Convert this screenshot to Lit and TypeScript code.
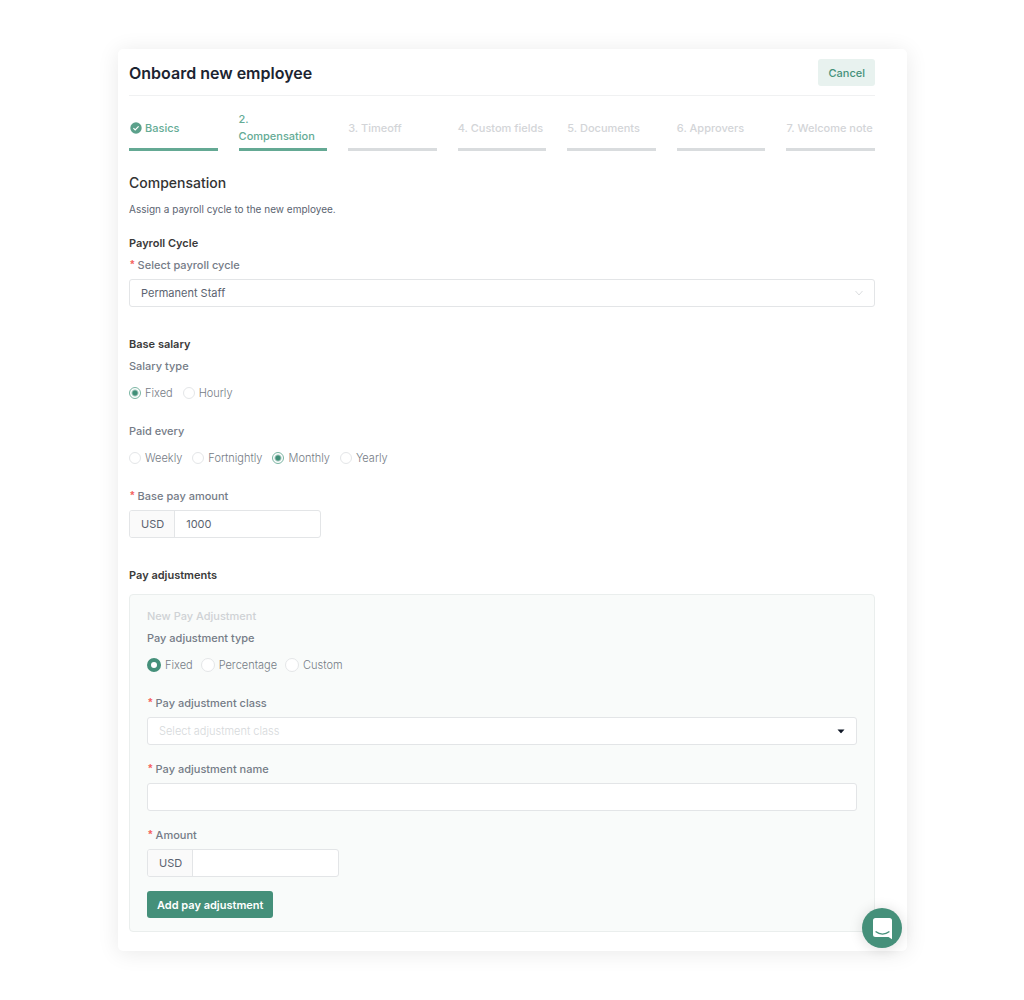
import { LitElement, html, css, nothing } from "lit";
import { customElement, state } from "lit/decorators.js";

interface Choice {
  value: string;
  label: string;
}

const STEPS = [
  "Basics",
  "2. Compensation",
  "3. Timeoff",
  "4. Custom fields",
  "5. Documents",
  "6. Approvers",
  "7. Welcome note",
];

const SALARY_TYPES: Choice[] = [
  { value: "fixed", label: "Fixed" },
  { value: "hourly", label: "Hourly" },
];

const PERIODS: Choice[] = [
  { value: "weekly", label: "Weekly" },
  { value: "fortnightly", label: "Fortnightly" },
  { value: "monthly", label: "Monthly" },
  { value: "yearly", label: "Yearly" },
];

const ADJUSTMENT_TYPES: Choice[] = [
  { value: "fixed", label: "Fixed" },
  { value: "percentage", label: "Percentage" },
  { value: "custom", label: "Custom" },
];

@customElement("app-root")
export class AppRoot extends LitElement {
  @state() private currentStep = 1;

  static styles = css`
    :host {
      display: block;
      box-sizing: border-box;
      min-height: 100vh;
      padding: 49px 117px 49px 118px;
      background: #fff;
      font-family: Inter, "Liberation Sans", sans-serif;
      font-size: 11px;
      line-height: 16px;
      color: #6b7280;
    }
    * {
      box-sizing: border-box;
    }
    h1, h2, h3, h4, p, ol, fieldset, legend {
      margin: 0;
      padding: 0;
      border: 0;
    }
    button, input, select {
      font: inherit;
      color: inherit;
      margin: 0;
    }
    .card {
      position: relative;
      padding: 10px 32px 19px 11px;
      background: #fff;
      border-radius: 5px;
      box-shadow: 0 2px 22px rgba(0, 0, 0, 0.09);
    }
    .header {
      display: flex;
      align-items: center;
      justify-content: space-between;
      padding-bottom: 9px;
      border-bottom: 1px solid #f0f1f2;
    }
    .title {
      font-size: 16px;
      line-height: 24px;
      font-weight: 600;
      color: #1c2431;
    }
    .button {
      height: 27px;
      padding: 0 10px;
      border: 0;
      border-radius: 3px;
      font-weight: 500;
      color: #45917a;
      background: #e8f2ef;
      cursor: pointer;
    }
    .button.primary {
      margin-top: 14px;
      font-weight: 600;
      color: #fff;
      background: #45907a;
    }
    .steps {
      display: grid;
      grid-template-columns: repeat(7, 1fr);
      gap: 21px;
      margin-top: 15px;
      list-style: none;
    }
    .step {
      display: flex;
      align-items: center;
      gap: 2px;
      height: 40px;
      padding-bottom: 3px;
      border-bottom: 3px solid #d9dcde;
      font-size: 11px;
      line-height: 17px;
      font-weight: 500;
      color: #d3d5d8;
    }
    .step.reached {
      color: #64ab95;
      border-color: #64a994;
    }
    .check {
      flex: none;
      width: 14px;
      height: 14px;
    }
    .heading {
      margin-top: 22px;
      font-size: 14px;
      line-height: 20px;
      font-weight: 500;
      color: #333;
    }
    .intro {
      margin-top: 8px;
      font-size: 10px;
      color: #5b6471;
    }
    .subheading {
      margin-top: 29px;
      font-size: 11px;
      font-weight: 600;
      color: #3a3a3a;
    }
    .intro + .subheading {
      margin-top: 18px;
    }
    .label {
      display: block;
      margin-top: 16px;
      font-weight: 500;
      color: #757c87;
    }
    .subheading + .label {
      margin-top: 6px;
    }
    .choices + .label {
      margin-top: 21px;
    }
    .star {
      display: inline-block;
      line-height: 12px;
      font-family: "Liberation Mono", monospace;
      color: #f5635f;
      font-weight: 700;
    }
    .required {
      display: flex;
      align-items: center;
      gap: 2px;
    }
    .row {
      display: flex;
      flex-wrap: wrap;
      gap: 10px;
      padding-top: 10px;
    }
    .option {
      display: flex;
      align-items: center;
      gap: 4px;
      height: 18px;
      font-weight: 300;
      color: #757b85;
    }
    .radio {
      appearance: none;
      width: 12px;
      height: 12px;
      border: 1px solid #e4e6e8;
      border-radius: 50%;
      background: #fff;
    }
    .radio:checked {
      border-color: #7bb5a3;
      background: radial-gradient(circle, #3f8e77 0 2px, #fff 4px);
    }
    .panel .row {
      gap: 8px;
    }
    .panel .radio {
      width: 14px;
      height: 14px;
    }
    .panel .radio:checked {
      border: 4px solid #45907a;
      background: #fff;
    }
    .control {
      display: flex;
      align-items: center;
      height: 28px;
      margin-top: 6px;
      border: 1px solid #e3e5e7;
      border-radius: 3px;
      background: #fff;
      color: #5b6370;
      overflow: hidden;
    }
    .field {
      appearance: none;
      flex: 1;
      min-width: 0;
      height: 100%;
      padding: 0 11px;
      border: 0;
      outline: 0;
      background: transparent;
    }
    .field.empty {
      font-weight: 300;
      color: #d6d9db;
    }
    .arrow {
      flex: none;
      width: 10px;
      height: 10px;
      margin-right: 10px;
    }
    .money {
      max-width: 192px;
    }
    .unit {
      display: flex;
      align-items: center;
      height: 100%;
      padding: 0 10px 0 11px;
      border-right: 1px solid #e3e5e7;
      background: #fafafa;
    }
    .panel {
      margin-top: 11px;
      padding: 13px 17px;
      border: 1px solid #eaeeed;
      border-radius: 4px;
      background: #f9fbfa;
    }
    .panel .subheading {
      margin-top: 0;
      font-weight: 500;
      color: #cfd2d5;
    }
    .chat {
      position: absolute;
      right: 5px;
      bottom: 3px;
      width: 40px;
      height: 40px;
      padding: 0;
      border: 0;
      border-radius: 50%;
      background: #45907a;
      box-shadow: 0 1px 14px rgba(0, 0, 0, 0.14);
      cursor: pointer;
    }
    .chat svg {
      display: block;
      width: 40px;
      height: 40px;
    }
  `;

  private required(id: string, label: string) {
    return html`<label class="label required" for=${id}
      ><span class="star" aria-hidden="true">*</span><span>${label}</span></label
    >`;
  }

  private choices(name: string, legend: string, items: Choice[], selected: string) {
    return html`
      <div class="label" id=${name}>${legend}</div>
      <div class="choices row" role="radiogroup" aria-labelledby=${name}>
        ${items.map(
          (item) => html`<label class="option">
            <input class="radio" type="radio" name=${name} value=${item.value}
              ?checked=${item.value === selected} />${item.label}
          </label>`,
        )}
      </div>
    `;
  }

  private money(id: string, label: string, value: string) {
    return html`
      ${this.required(id, label)}
      <div class="control money">
        <span class="unit">USD</span>
        <input class="field" id=${id} type="text" inputmode="decimal" .value=${value} />
      </div>
    `;
  }

  private step(label: string, index: number) {
    const reached = index <= this.currentStep;
    return html`<li class="step ${reached ? "reached" : ""}"
      aria-current=${index === this.currentStep ? "step" : nothing}>
      ${index < this.currentStep
        ? html`<svg class="check" viewBox="0 0 14 14" aria-hidden="true">
            <circle cx="7" cy="7" r="5.7" fill="#5ba18b" />
            <path d="M4.4 7.1l1.8 1.8 3.4-3.5" fill="none" stroke="#fff" stroke-width="1.2" />
          </svg>`
        : nothing}
      <span>${label}</span>
    </li>`;
  }

  render() {
    return html`
      <main class="card">
        <header class="header">
          <h1 class="title">Onboard new employee</h1>
          <button class="button" type="button">Cancel</button>
        </header>
        <ol class="steps">
          ${STEPS.map((label, index) => this.step(label, index))}
        </ol>

        <h2 class="heading">Compensation</h2>
        <p class="intro">Assign a payroll cycle to the new employee.</p>

        <h3 class="subheading">Payroll Cycle</h3>
        ${this.required("cycle", "Select payroll cycle")}
        <div class="control">
          <select class="field" id="cycle">
            <option>Permanent Staff</option>
          </select>
          <svg class="arrow" viewBox="0 0 10 10" aria-hidden="true">
            <path d="M1.5 3l3.5 4 3.5-4" fill="none" stroke="#dcdee0" />
          </svg>
        </div>

        <h3 class="subheading">Base salary</h3>
        ${this.choices("salary-type", "Salary type", SALARY_TYPES, "fixed")}
        ${this.choices("period", "Paid every", PERIODS, "monthly")}
        ${this.money("base-pay", "Base pay amount", "1000")}

        <h3 class="subheading">Pay adjustments</h3>
        <section class="panel">
          <h4 class="subheading">New Pay Adjustment</h4>
          ${this.choices("adjustment-type", "Pay adjustment type", ADJUSTMENT_TYPES, "fixed")}
          ${this.required("adjustment-class", "Pay adjustment class")}
          <div class="control">
            <select class="field empty" id="adjustment-class">
              <option>Select adjustment class</option>
            </select>
            <svg class="arrow" viewBox="0 0 10 10" aria-hidden="true">
              <path d="M1.500 3.400h7L5.600 6.800a.8.8 0 0 1-1.200 0z" fill="#111827" />
            </svg>
          </div>
          ${this.required("adjustment-name", "Pay adjustment name")}
          <div class="control">
            <input class="field" id="adjustment-name" type="text" />
          </div>
          ${this.money("adjustment-amount", "Amount", "")}
          <button class="button primary" type="button">Add pay adjustment</button>
        </section>

        <button class="chat" type="button" aria-label="Open chat">
          <svg viewBox="0 0 40 40" aria-hidden="true">
            <path d="M13.5 10h14a2.500 2.500 0 0 1 2.500 2.500V31.200L26.500 29H13.500A2.500 2.500 0 0 1 11 26.500V12.500A2.500 2.500 0 0 1 13.500 10z" fill="#fff" />
            <path d="M14 23.800c3.600 3 9.400 3 13 0" fill="none" stroke="#45907a" stroke-width="1.300" stroke-linecap="round" />
          </svg>
        </button>
      </main>
    `;
  }
}
